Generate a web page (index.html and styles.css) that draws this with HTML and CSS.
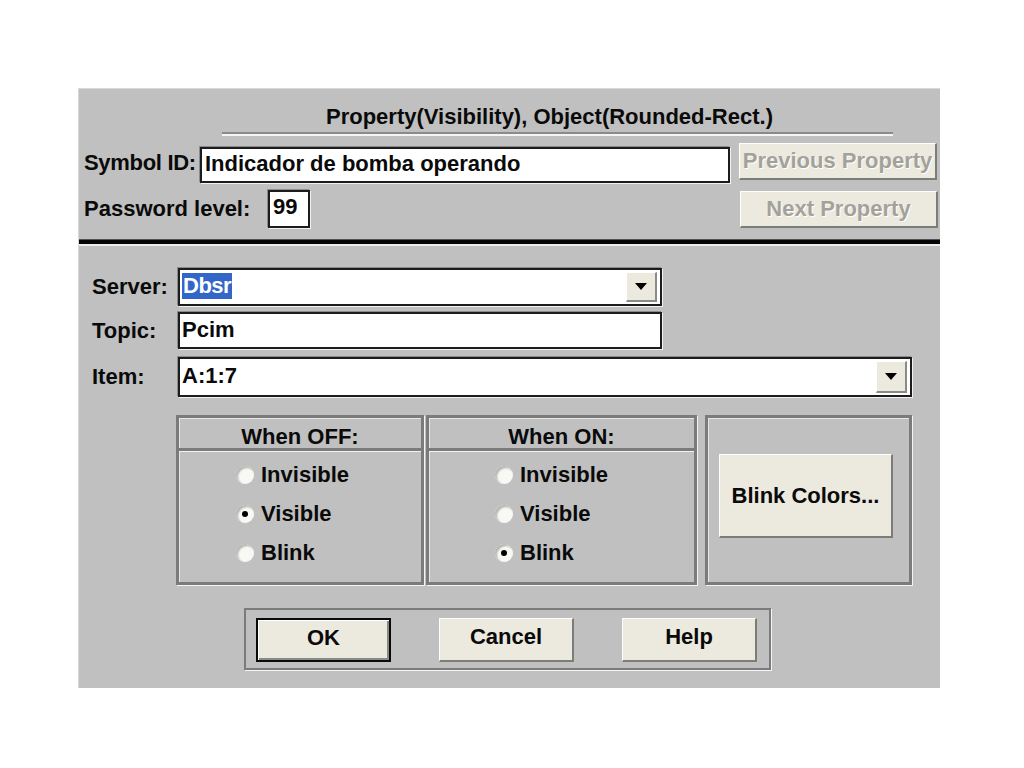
FILE: index.html
```html
<!DOCTYPE html>
<html>
<head>
<meta charset="utf-8">
<link rel="stylesheet" href="styles.css">
</head>
<body>
<div class="dialog">
  <div class="top">
    <div class="title">Property(Visibility), Object(Rounded-Rect.)</div>
    <div class="rule"></div>
    <div class="row row1">
      <span class="lbl lbl-sym">Symbol ID:</span>
      <div class="field sym">Indicador de bomba operando</div>
      <div class="btn disabled prev">Previous Property</div>
    </div>
    <div class="row row2">
      <span class="lbl lbl-pw">Password level:</span>
      <div class="field pw">99</div>
      <div class="btn disabled next">Next Property</div>
    </div>
  </div>
  <div class="sep"></div>
  <div class="lower">
    <div class="frow">
      <span class="flbl">Server:</span>
      <div class="field combo server">
        <span class="val"><span class="sel">Dbsr</span></span>
        <span class="dd"><span class="tri"></span></span>
      </div>
    </div>
    <div class="frow topic-row">
      <span class="flbl">Topic:</span>
      <div class="field combo topic"><span class="val">Pcim</span></div>
    </div>
    <div class="frow item-row">
      <span class="flbl">Item:</span>
      <div class="field combo item">
        <span class="val">A:1:7</span>
        <span class="dd"><span class="tri"></span></span>
      </div>
    </div>
  </div>
  <div class="groups">
    <div class="gcol off">
      <div class="ghead">When OFF:</div>
      <div class="gbody">
        <div class="opt"><span class="radio"></span>Invisible</div>
        <div class="opt"><span class="radio checked"></span>Visible</div>
        <div class="opt"><span class="radio"></span>Blink</div>
      </div>
    </div>
    <div class="gcol on">
      <div class="ghead">When ON:</div>
      <div class="gbody">
        <div class="opt"><span class="radio"></span>Invisible</div>
        <div class="opt"><span class="radio"></span>Visible</div>
        <div class="opt"><span class="radio checked"></span>Blink</div>
      </div>
    </div>
    <div class="gcol blink">
      <div class="btn blinkbtn">Blink Colors...</div>
    </div>
  </div>
  <div class="actions">
    <div class="btn act default">OK</div>
    <div class="btn act">Cancel</div>
    <div class="btn act">Help</div>
  </div>
</div>
</body>
</html>
```

FILE: styles.css
```css
html, body {
  margin: 0;
  padding: 0;
  background: #ffffff;
}
body {
  font-family: "Liberation Sans", Arial, sans-serif;
  font-weight: bold;
  font-size: 22px;
  color: #0a0a0a;
}
.dialog {
  margin: 88px 0 0 78px;
  width: 862px;
  height: 600px;
  background: #c0c0c0;
  box-sizing: border-box;
  border-left: 1px solid #d8d8d8;
  border-top: 1px solid #d8d8d8;
}
.top {
  padding-top: 15px;
}
.title {
  margin-left: 143px;
  width: 655px;
  height: 26px;
  line-height: 26px;
  text-align: center;
  white-space: nowrap;
}
.rule {
  margin: 2px 0 0 143px;
  width: 671px;
  height: 0;
  border-top: 2px solid #8a8a8a;
  border-bottom: 2px solid #f4f4f4;
}
.row {
  display: flex;
  padding-left: 5px;
  padding-right: 2px;
}
.row1 {
  margin-top: 7px;
  align-items: flex-start;
  height: 40px;
}
.row2 {
  margin-top: 7px;
  align-items: flex-start;
  height: 38px;
}
.lbl {
  white-space: nowrap;
  align-self: center;
}
.lbl-sym { width: 116px; letter-spacing: -0.3px; }
.lbl-pw { width: 184px; }
.field {
  box-sizing: border-box;
  background: #ffffff;
  border: 2px solid #1c1c1c;
  box-shadow: 1px 1px 0 #f2f2f2, -1px -1px 0 #8a8a8a;
  white-space: nowrap;
}
.sym {
  margin-top: 4px;
  width: 530px;
  height: 36px;
  line-height: 30px;
  padding-left: 3px;
}
.pw {
  width: 42px;
  height: 38px;
  line-height: 30px;
  padding-left: 3px;
}
.btn {
  box-sizing: border-box;
  background: #ece9de;
  border-top: 1px solid #ffffff;
  border-left: 1px solid #ffffff;
  border-right: 2px solid #7c7c78;
  border-bottom: 2px solid #7c7c78;
  text-align: center;
  white-space: nowrap;
  display: flex;
  align-items: center;
  justify-content: center;
}
.disabled {
  color: #a3a29a;
  text-shadow: 1px 1px 0 #ffffff;
}
.prev {
  margin-left: 9px;
  width: 198px;
  height: 37px;
}
.next {
  margin-left: auto;
  margin-top: 1px;
  width: 198px;
  height: 37px;
}
.sep {
  margin-top: 11px;
  height: 4px;
  background: #050505;
  border-top: 1px solid #505050;
  border-bottom: 2px solid #ececec;
}
.lower {
  padding-top: 22px;
  padding-left: 13px;
}
.frow {
  display: flex;
  align-items: center;
}
.topic-row { margin-top: 6px; }
.item-row { margin-top: 8px; }
.flbl {
  width: 86px;
  white-space: nowrap;
}
.combo {
  display: flex;
  align-items: center;
}
.val {
  flex: 1;
  padding-left: 2px;
  line-height: 26px;
  margin-top: -2px;
}
.server { width: 484px; height: 38px; }
.topic { width: 484px; height: 37px; }
.item { width: 734px; height: 40px; }
.sel {
  background: #3266c8;
  color: #ffffff;
  padding: 0 1px;
  display: inline-block;
  line-height: 26px;
  letter-spacing: -0.5px;
}
.dd {
  width: 31px;
  height: 30px;
  margin-right: 3px;
  box-sizing: border-box;
  background: #ece9de;
  border-top: 1px solid #ffffff;
  border-left: 1px solid #ffffff;
  border-right: 2px solid #8a8a86;
  border-bottom: 2px solid #8a8a86;
  display: flex;
  align-items: center;
  justify-content: center;
}
.item .dd { height: 32px; }
.tri {
  width: 0;
  height: 0;
  border-left: 6px solid transparent;
  border-right: 6px solid transparent;
  border-top: 7px solid #000000;
}
.groups {
  display: flex;
  margin-top: 18px;
  margin-left: 97px;
  height: 170px;
}
.gcol {
  box-sizing: border-box;
  border: 3px solid #7b7b7b;
  box-shadow: 1px 1px 0 #f4f4f4, inset 1px 1px 0 #e6e6e6;
}
.off { width: 248px; }
.on { width: 271px; margin-left: 2px; }
.blink { width: 207px; margin-left: 8px; }
.ghead {
  box-sizing: border-box;
  height: 33px;
  padding-top: 7px;
  line-height: 23px;
  text-align: center;
  border-bottom: 3px solid #7b7b7b;
  box-shadow: 0 1px 0 #f4f4f4;
}
.gbody {
  padding-top: 4px;
}
.off .gbody { padding-left: 57px; }
.on .gbody { padding-left: 66px; }
.opt {
  display: flex;
  align-items: center;
  height: 39px;
  white-space: nowrap;
}
.radio {
  width: 18px;
  height: 18px;
  border-radius: 50%;
  background: #f8f8f5;
  box-shadow: inset 2px 2px 2px #b4b4b0, 0 0 1px #d0d0d0;
  margin-right: 7px;
  position: relative;
  flex: none;
}
.radio.checked::after {
  content: "";
  position: absolute;
  left: 6px;
  top: 6px;
  width: 6px;
  height: 6px;
  border-radius: 50%;
  background: #000000;
}
.blinkbtn {
  margin: 36px 0 0 11px;
  width: 174px;
  height: 84px;
}
.actions {
  box-sizing: border-box;
  margin: 23px 0 0 165px;
  width: 527px;
  height: 62px;
  border: 2px solid #7b7b7b;
  box-shadow: 1px 1px 0 #f4f4f4;
  display: flex;
  align-items: flex-start;
  padding: 8px 0 0 10px;
  gap: 48px;
}
.act {
  width: 135px;
  height: 44px;
  padding-bottom: 5px;
}
.default {
  border: 2px solid #0a0a0a;
  box-shadow: inset 1px 1px 0 #ffffff, inset -2px -2px 0 #8a8a86;
}
```
